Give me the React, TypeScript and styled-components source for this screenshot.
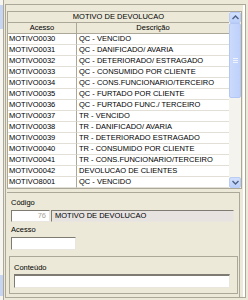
import React from 'react'
import styled, { createGlobalStyle } from 'styled-components'

const rows: [string, string][] = [
  ['MOTIVO0030', 'QC - VENCIDO'],
  ['MOTIVO0031', 'QC - DANIFICADO/ AVARIA'],
  ['MOTIVO0032', 'QC - DETERIORADO/ ESTRAGADO'],
  ['MOTIVO0033', 'QC - CONSUMIDO POR CLIENTE'],
  ['MOTIVO0034', 'QC - CONS.FUNCIONARIO/TERCEIRO'],
  ['MOTIVO0035', 'QC - FURTADO POR CLIENTE'],
  ['MOTIVO0036', 'QC - FURTADO FUNC./ TERCEIRO'],
  ['MOTIVO0037', 'TR - VENCIDO'],
  ['MOTIVO0038', 'TR - DANIFICADO/ AVARIA'],
  ['MOTIVO0039', 'TR - DETERIORADO ESTRAGADO'],
  ['MOTIVO0040', 'TR - CONSUMIDO POR CLIENTE'],
  ['MOTIVO0041', 'TR - CONS.FUNCIONARIO/TERCEIRO'],
  ['MOTIVO0042', 'DEVOLUCAO DE CLIENTES'],
  ['MOTIVO8001', 'QC - VENCIDO'],
]

const GlobalStyle = createGlobalStyle`
  body {
    margin: 0;
    background: #ECE9D8;
    font-family: "Liberation Sans", Tahoma, sans-serif;
    font-size: 7.5px;
    color: #000;
  }
`

const Arrow = ({ up }: { up?: boolean }) => (
  <svg width="7" height="5" viewBox="0 0 7 5">
    <path
      d={up ? 'M0.5 4 L3.5 1 L6.5 4' : 'M0.5 1 L3.5 4 L6.5 1'}
      fill="none"
      stroke="#4D6185"
      strokeWidth="1.4"
    />
  </svg>
)

export default function App() {
  return (
    <Page>
      <GlobalStyle />
      <LeftStrip>
        <SideTab h={24} />
        <SideTab h={21} />
      </LeftStrip>
      <Frame>
        <Grid>
          <Table>
            <TitleCell>MOTIVO DE DEVOLUCAO</TitleCell>
            <HeadCell first>Acesso</HeadCell>
            <HeadCell>Descrição</HeadCell>
            {rows.map(([code, desc]) => (
              <React.Fragment key={code}>
                <Cell first>{code}</Cell>
                <Cell>{desc}</Cell>
              </React.Fragment>
            ))}
          </Table>
          <ScrollBar>
            <ScrollBtn><Arrow up /></ScrollBtn>
            <Track>
              <Thumb>
                <Grip />
              </Thumb>
            </Track>
            <ScrollBtn><Arrow /></ScrollBtn>
          </ScrollBar>
        </Grid>
        <Panel>
          <Field>
            <Label>Código</Label>
            <FieldRow>
              <Input w={39} align="right" muted>76</Input>
              <Input w={183} disabled>MOTIVO DE DEVOLUCAO</Input>
            </FieldRow>
          </Field>
          <Field gap={3}>
            <Label>Acesso</Label>
            <Input w={65} h={13} />
          </Field>
          <GroupBox>
            <Label>Conteúdo</Label>
            <Input w={216} h={14} deep />
          </GroupBox>
        </Panel>
      </Frame>
    </Page>
  )
}

const Page = styled.div`
  display: flex;
  width: 248px;
  height: 300px;
  overflow: hidden;
  background: #ECE9D8;
`

const LeftStrip = styled.div`
  width: 4px;
  border-right: 1px solid #ACA899;
  background: #F6F5F0;
  display: flex;
  flex-direction: column;
  justify-content: space-between;
  padding: 5px 0 4px;
  box-sizing: border-box;
`

const SideTab = styled.div<{ h: number }>`
  height: ${({ h }) => h}px;
  background: #C6D5F2;
`

const Frame = styled.div`
  flex: 1;
  margin: 4px 2px 2px 1px;
  border: 1px solid #ACA899;
  box-shadow: inset -2px 0 0 #fff;
  padding: 6px 3px 0 1px;
  display: flex;
  flex-direction: column;
`

const Grid = styled.div`
  display: flex;
  height: 176px;
  border: 1px solid #ACA899;
  background: #fff;
`

const Table = styled.div`
  flex: 1;
  display: grid;
  grid-template-columns: 69px 1fr;
  grid-auto-rows: 11px;
  align-content: start;
  line-height: 10px;
  white-space: nowrap;
  overflow: hidden;
`

const TitleCell = styled.div`
  grid-column: 1 / -1;
  background: #ECE9D8;
  border-bottom: 1px solid #ACA899;
  text-align: center;
`

const HeadCell = styled.div<{ first?: boolean }>`
  background: #ECE9D8;
  border-bottom: 1px solid #ACA899;
  border-right: ${({ first }) => (first ? '1px solid #ACA899' : 'none')};
  text-align: center;
`

const Cell = styled.div<{ first?: boolean }>`
  border-bottom: 1px solid #E2E0D6;
  border-right: ${({ first }) => (first ? '1px solid #ACA899' : 'none')};
  padding-left: ${({ first }) => (first ? 1 : 2)}px;
  overflow: hidden;
`

const ScrollBar = styled.div`
  width: 12px;
  display: flex;
  flex-direction: column;
  background: #F4F3EE;
`

const ScrollBtn = styled.div`
  height: 11px;
  display: flex;
  align-items: center;
  justify-content: center;
  box-sizing: border-box;
  border: 1px solid #B9CCF3;
  border-radius: 2px;
  background: linear-gradient(#D3E0FD, #BCD0FA);
`

const Track = styled.div`
  flex: 1;
  display: flex;
  flex-direction: column;
`

const Thumb = styled.div`
  height: 75px;
  box-sizing: border-box;
  border: 1px solid #B2C7F5;
  border-radius: 2px;
  background: linear-gradient(90deg, #CBDAFC, #BED1FB);
  display: flex;
  align-items: center;
  justify-content: center;
`

const Grip = styled.div`
  width: 5px;
  height: 5px;
  background: repeating-linear-gradient(#EEF3FE 0 1px, transparent 1px 2px);
`

const Panel = styled.div`
  flex: 1;
  margin: 3px 2px 0 0;
  border-top: 1px solid #ACA899;
  border-right: 1px solid #ACA899;
  padding: 5px 0 0 2px;
  display: flex;
  flex-direction: column;
`

const Field = styled.div<{ gap?: number }>`
  display: flex;
  flex-direction: column;
  align-items: flex-start;
  gap: 1px;
  padding-left: 2px;
  margin-top: ${({ gap }) => gap ?? 0}px;
`

const FieldRow = styled.div`
  display: flex;
  gap: 1px;
`

const Label = styled.div`
  height: 10px;
  line-height: 10px;
  margin-bottom: 1px;
`

const Input = styled.div<{ w: number; h?: number; align?: string; muted?: boolean; disabled?: boolean; deep?: boolean }>`
  width: ${({ w }) => w}px;
  height: ${({ h }) => h ?? 12}px;
  box-sizing: border-box;
  border-style: solid;
  border-width: ${({ deep }) => (deep ? '2px 1px 1px 1px' : '1px')};
  border-color: #7E7C72 #E8E6DE #E8E6DE #7E7C72;
  background: ${({ disabled }) => (disabled ? '#E6E3E0' : '#fff')};
  color: ${({ muted }) => (muted ? '#A8A597' : '#000')};
  text-align: ${({ align }) => align ?? 'left'};
  line-height: 10px;
  padding: 0 3px;
  white-space: nowrap;
`

const GroupBox = styled.div`
  margin: 6px 1px 0 0;
  height: 38px;
  box-sizing: border-box;
  border: 1px solid #ACA899;
  padding: 6px 0 0 4px;
  display: flex;
  flex-direction: column;
  align-items: flex-start;
`
